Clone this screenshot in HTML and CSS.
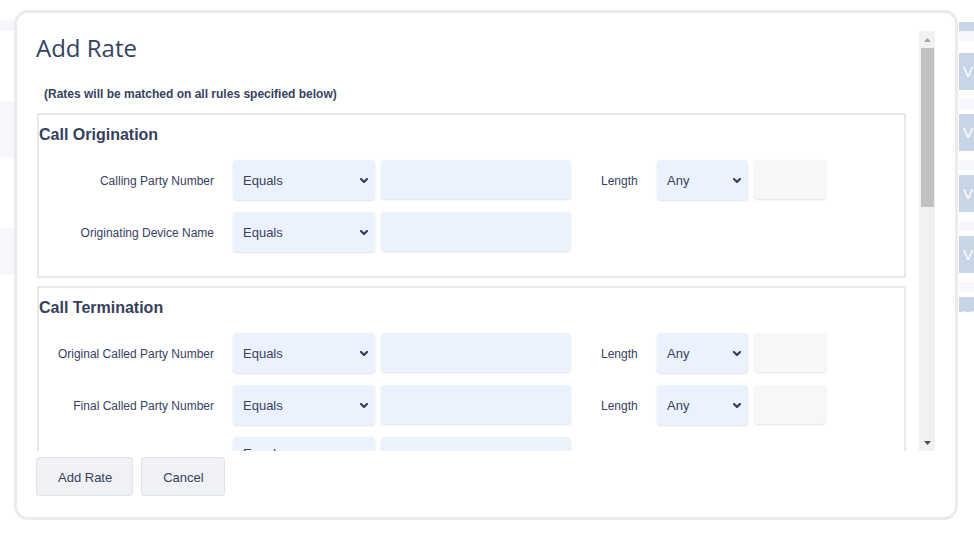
FILE: index.html
```html
<!DOCTYPE html>
<html>
<head>
<meta charset="utf-8">
<title>Add Rate</title>
<link rel="stylesheet" href="styles.css">
</head>
<body>
<div class="page">
  <div class="bg-left">
    <div class="strip s1"></div>
    <div class="strip s2"></div>
    <div class="strip s3"></div>
  </div>
  <div class="bg-main"></div>
  <div class="bg-right">
    <div class="rb top"></div>
    <div class="rf top"></div>
    <div class="rb">V</div><div class="rf"></div>
    <div class="rb">V</div><div class="rf"></div>
    <div class="rb">V</div><div class="rf"></div>
    <div class="rb">V</div><div class="rf"></div>
    <div class="rb cut">V</div>
  </div>
</div>

<div class="modal">
  <div class="scroll-wrap">
    <div class="scroll">
      <h1 class="title">Add Rate</h1>
      <p class="note">(Rates will be matched on all rules specified below)</p>

      <div class="group">
        <h2 class="group-title">Call Origination</h2>
        <div class="row">
          <label class="lbl">Calling Party Number</label>
          <div class="select wide"><span>Equals</span><svg class="chev" viewBox="0 0 8 5" width="8" height="5"><path d="M1 1l3 3 3-3"/></svg></div>
          <input class="field" type="text">
          <span class="len-lbl">Length</span>
          <div class="select narrow"><span>Any</span><svg class="chev" viewBox="0 0 8 5" width="8" height="5"><path d="M1 1l3 3 3-3"/></svg></div>
          <input class="field small" type="text">
        </div>
        <div class="row">
          <label class="lbl">Originating Device Name</label>
          <div class="select wide"><span>Equals</span><svg class="chev" viewBox="0 0 8 5" width="8" height="5"><path d="M1 1l3 3 3-3"/></svg></div>
          <input class="field" type="text">
        </div>
      </div>

      <div class="group">
        <h2 class="group-title">Call Termination</h2>
        <div class="row">
          <label class="lbl">Original Called Party Number</label>
          <div class="select wide"><span>Equals</span><svg class="chev" viewBox="0 0 8 5" width="8" height="5"><path d="M1 1l3 3 3-3"/></svg></div>
          <input class="field" type="text">
          <span class="len-lbl">Length</span>
          <div class="select narrow"><span>Any</span><svg class="chev" viewBox="0 0 8 5" width="8" height="5"><path d="M1 1l3 3 3-3"/></svg></div>
          <input class="field small" type="text">
        </div>
        <div class="row">
          <label class="lbl">Final Called Party Number</label>
          <div class="select wide"><span>Equals</span><svg class="chev" viewBox="0 0 8 5" width="8" height="5"><path d="M1 1l3 3 3-3"/></svg></div>
          <input class="field" type="text">
          <span class="len-lbl">Length</span>
          <div class="select narrow"><span>Any</span><svg class="chev" viewBox="0 0 8 5" width="8" height="5"><path d="M1 1l3 3 3-3"/></svg></div>
          <input class="field small" type="text">
        </div>
        <div class="row">
          <label class="lbl">Destination Device Name</label>
          <div class="select wide third"><span>Equals</span><svg class="chev" viewBox="0 0 8 5" width="8" height="5"><path d="M1 1l3 3 3-3"/></svg></div>
          <input class="field" type="text">
        </div>
        <div class="row">
          <label class="lbl">Final Called Party Partition</label>
          <div class="select wide"><span>Equals</span><svg class="chev" viewBox="0 0 8 5" width="8" height="5"><path d="M1 1l3 3 3-3"/></svg></div>
          <input class="field" type="text">
        </div>
      </div>

      <div class="group">
        <h2 class="group-title">Call Details</h2>
        <div class="row">
          <label class="lbl">Duration (seconds)</label>
          <div class="select wide"><span>Greater Than</span><svg class="chev" viewBox="0 0 8 5" width="8" height="5"><path d="M1 1l3 3 3-3"/></svg></div>
          <input class="field" type="text">
        </div>
        <div class="row">
          <label class="lbl">Call Type</label>
          <div class="select wide"><span>Equals</span><svg class="chev" viewBox="0 0 8 5" width="8" height="5"><path d="M1 1l3 3 3-3"/></svg></div>
          <input class="field" type="text">
        </div>
        <div class="row">
          <label class="lbl">Cause Code</label>
          <div class="select wide"><span>Equals</span><svg class="chev" viewBox="0 0 8 5" width="8" height="5"><path d="M1 1l3 3 3-3"/></svg></div>
          <input class="field" type="text">
        </div>
      </div>

      <div class="group">
        <h2 class="group-title">Rate</h2>
        <div class="row">
          <label class="lbl">Cost per Minute</label>
          <input class="field" type="text">
        </div>
      </div>
    </div>

    <div class="scrollbar" aria-hidden="true">
      <div class="sb-btn"><svg width="7" height="4" viewBox="0 0 7 4"><path class="arr-up" d="M0 4L3.5 0 7 4Z"/></svg></div>
      <div class="sb-track"><div class="sb-thumb"></div></div>
      <div class="sb-btn"><svg width="7" height="4" viewBox="0 0 7 4"><path class="arr-down" d="M0 0H7L3.5 4Z"/></svg></div>
    </div>
  </div>

  <div class="actions">
    <button class="btn" type="button">Add Rate</button>
    <button class="btn" type="button">Cancel</button>
  </div>
</div>
</body>
</html>
```

FILE: styles.css
```css
* { box-sizing: border-box; }

html, body {
  margin: 0;
  padding: 0;
  background: #ffffff;
  font-family: "Liberation Sans", Arial, sans-serif;
  color: #37425f;
}

.page {
  display: flex;
  width: 974px;
  height: 540px;
  overflow: hidden;
}

.bg-left {
  width: 14px;
  display: flex;
  flex-direction: column;
}
.strip { background: #f5f7fc; }
.s1 { margin-top: 20px; height: 11px; }
.s2 { margin-top: 70px; height: 56px; }
.s3 { margin-top: 71px; height: 47px; }

.bg-main { flex: 1; }

.bg-right {
  width: 15px;
  display: flex;
  flex-direction: column;
  padding-top: 22px;
}
.rb {
  background: #c7d5e7;
  height: 37px;
  color: #ffffff;
  font-size: 15px;
  line-height: 37px;
  padding-left: 4px;
  margin-bottom: 9px;
  overflow: hidden;
}
.rf {
  background: #f5f7fc;
  height: 10px;
  margin-bottom: 5px;
}
.rb.top { height: 9px; margin-bottom: 0; }
.rf.top { height: 10px; margin-bottom: 12px; }
.rb.cut { height: 15px; line-height: 37px; }

/* modal */
.modal {
  position: absolute;
  left: 14px;
  top: 10px;
  width: 944px;
  height: 510px;
  background: #ffffff;
  border: 3px solid #ebebeb;
  border-radius: 14px;
  padding: 18px 20px 0 19px;
}

.scroll-wrap {
  display: flex;
  height: 420px;
}

.scroll {
  flex: 1;
  min-width: 0;
  overflow: hidden;
}

.scrollbar {
  width: 16px;
  background: #f1f1f1;
  display: flex;
  flex-direction: column;
}
.sb-btn {
  height: 17px;
  display: flex;
  align-items: center;
  justify-content: center;
}
.sb-btn svg { display: block; }
.arr-up { fill: #a3a3a3; }
.arr-down { fill: #505050; }
.sb-track { flex: 1; }
.sb-thumb {
  height: 159px;
  margin: 0 1px 0 2px;
  background: #c1c1c1;
}

.title {
  margin: 0;
  font-family: "Open Sans", sans-serif;
  font-weight: 400;
  font-size: 24px;
  line-height: 34px;
  color: #37425f;
}

.note {
  margin: 22px 0 0 8px;
  font-size: 12px;
  font-weight: bold;
  line-height: 14px;
  color: #37425f;
}

.group {
  margin: 12px 13px 0 1px;
  border: 2px solid #e8e8e8;
  padding: 9px 0 24px 0;
}
.group + .group { margin-top: 8px; }

.group-title {
  margin: 0;
  font-size: 16px;
  font-weight: bold;
  line-height: 21px;
  color: #35405c;
}

.row {
  display: flex;
  align-items: flex-start;
  margin-top: 15px;
}
.row + .row { margin-top: 12px; }

.lbl {
  width: 175px;
  height: 40px;
  margin-right: 19px;
  padding-top: 2px;
  text-align: right;
  font-size: 12px;
  line-height: 38px;
  color: #37425f;
}

.select {
  height: 40px;
  background: #ecf2fd;
  border-radius: 4px;
  box-shadow: 0 1px 2px rgba(0, 0, 0, 0.12);
  display: flex;
  align-items: center;
  justify-content: space-between;
  padding: 0 7px 0 10px;
  font-size: 13px;
  color: #37425f;
}
.select.wide { width: 142px; }
.select.narrow { width: 91px; }
.select.third { align-items: flex-start; padding-top: 9px; }

.chev {
  fill: none;
  stroke: #37425f;
  stroke-width: 2.2;
  stroke-linecap: round;
  stroke-linejoin: round;
}
.select.third .chev { margin-top: 5px; }

.field {
  width: 190px;
  height: 39px;
  margin: 0 0 0 6px;
  border: none;
  border-radius: 4px;
  background: #ecf2fd;
  box-shadow: 0 1px 2px rgba(0, 0, 0, 0.12);
  font-family: inherit;
  padding: 0 10px;
}
.lbl + .field { margin-left: 0; }
.field.small {
  width: 72px;
  background: #f7f7f7;
}

.len-lbl {
  width: 56px;
  height: 40px;
  margin-left: 30px;
  padding-top: 2px;
  font-size: 12px;
  line-height: 38px;
  color: #37425f;
}

.actions {
  display: flex;
  gap: 8px;
  margin-top: 6px;
}

.btn {
  height: 39px;
  padding: 2px 20px 0 21px;
  border: 1px solid #e0e3e9;
  border-radius: 3px;
  background: #eff1f5;
  font-family: "Liberation Sans", Arial, sans-serif;
  font-size: 13px;
  line-height: 35px;
  color: #37425f;
}
```
